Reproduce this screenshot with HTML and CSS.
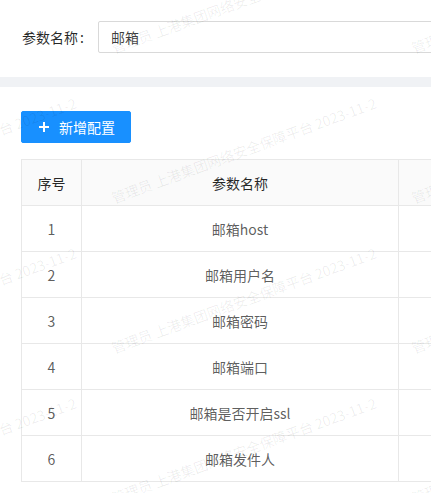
FILE: index.html
```html
<!DOCTYPE html>
<html lang="zh-CN">
<head>
<meta charset="utf-8">
<title>参数配置</title>
<link rel="stylesheet" href="styles.css">
</head>
<body>
<div class="page">
  <section class="card search-card">
    <div class="form-item">
      <label class="form-label">参数名称<span class="colon">:</span></label>
      <div class="input">邮箱</div>
    </div>
  </section>
  <section class="card list-card">
    <button class="btn-primary" type="button">
      <svg class="plus" viewBox="0 0 14 14" width="14" height="14" aria-hidden="true">
        <path d="M7 2v10M2 7h10" stroke="#fff" stroke-width="2" fill="none"/>
      </svg>
      <span>新增配置</span>
    </button>
    <table class="table">
      <thead>
        <tr><th class="c-no">序号</th><th class="c-name">参数名称</th><th class="c-val">参数值</th></tr>
      </thead>
      <tbody>
        <tr><td>1</td><td>邮箱host</td><td></td></tr>
        <tr><td>2</td><td>邮箱用户名</td><td></td></tr>
        <tr><td>3</td><td>邮箱密码</td><td></td></tr>
        <tr><td>4</td><td>邮箱端口</td><td></td></tr>
        <tr><td>5</td><td>邮箱是否开启ssl</td><td></td></tr>
        <tr><td>6</td><td>邮箱发件人</td><td></td></tr>
      </tbody>
    </table>
  </section>
</div>
<div class="watermark" aria-hidden="true">
  <div class="wm-grid">
    <span class="wm">管理员 上港集团网络安全保障平台 2023-11-2</span>
    <span class="wm">管理员 上港集团网络安全保障平台 2023-11-2</span>
    <span class="wm">管理员 上港集团网络安全保障平台 2023-11-2</span>
    <span class="wm">管理员 上港集团网络安全保障平台 2023-11-2</span>
    <span class="wm">管理员 上港集团网络安全保障平台 2023-11-2</span>
    <span class="wm">管理员 上港集团网络安全保障平台 2023-11-2</span>
    <span class="wm">管理员 上港集团网络安全保障平台 2023-11-2</span>
    <span class="wm">管理员 上港集团网络安全保障平台 2023-11-2</span>
    <span class="wm">管理员 上港集团网络安全保障平台 2023-11-2</span>
    <span class="wm">管理员 上港集团网络安全保障平台 2023-11-2</span>
    <span class="wm">管理员 上港集团网络安全保障平台 2023-11-2</span>
    <span class="wm">管理员 上港集团网络安全保障平台 2023-11-2</span>
  </div>
</div>
</body>
</html>
```

FILE: styles.css
```css
* { box-sizing: border-box; }
html, body {
  margin: 0;
  padding: 0;
  background: #f0f2f5;
  overflow: hidden;
}
body {
  font-family: "Noto Sans CJK SC", "Noto Sans", sans-serif;
  font-size: 14px;
  color: rgba(0, 0, 0, 0.65);
  position: relative;
  width: 431px;
  height: 493px;
}
.page {
  width: 760px;
  display: flex;
  flex-direction: column;
  gap: 10px;
}
.card {
  background: #fff;
}
.search-card {
  padding: 21px 0 24px 22px;
}
.form-item {
  display: flex;
  align-items: center;
}
.form-label {
  color: rgba(0, 0, 0, 0.85);
  line-height: 32px;
  width: 76px;
  white-space: nowrap;
}
.colon {
  margin-left: 2px;
}
.input {
  width: 600px;
  height: 32px;
  border: 1px solid #d9d9d9;
  border-radius: 2px;
  padding: 0 12px;
  line-height: 30px;
  color: rgba(0, 0, 0, 0.75);
}
.list-card {
  padding: 24px 0 40px 21px;
  display: flex;
  flex-direction: column;
  align-items: flex-start;
  gap: 16px;
  min-height: 420px;
}
.btn-primary {
  display: inline-flex;
  align-items: center;
  gap: 8px;
  height: 32px;
  width: 110px;
  padding: 0 15px;
  border: 1px solid #1890ff;
  border-radius: 2px;
  background: #1890ff;
  color: #fff;
  font-family: inherit;
  font-size: 14px;
}
.plus { display: block; }
.table {
  border-collapse: collapse;
  table-layout: fixed;
  width: 700px;
}
.table th, .table td {
  border: 1px solid #e8e8e8;
  height: 46px;
  padding: 0 8px;
  text-align: center;
  font-weight: normal;
  line-height: 22px;
}
.table th {
  background: #fafafa;
  color: rgba(0, 0, 0, 0.85);
}
.c-no { width: 60px; }
.c-name { width: 317px; }
.c-val { width: 323px; }

.watermark {
  position: absolute;
  inset: 0;
  overflow: hidden;
  pointer-events: none;
}
.wm-grid {
  display: grid;
  grid-template-columns: repeat(3, 300px);
  grid-auto-rows: 150px;
  margin: 48px 0 0 -188px;
}
.wm {
  display: block;
  width: 270px;
  height: 0;
  white-space: nowrap;
  overflow: visible;
  font-size: 14px;
  line-height: 0;
  color: rgba(0, 0, 0, 0.07);
  transform: rotate(-20deg);
  transform-origin: 0 0;
}
```
